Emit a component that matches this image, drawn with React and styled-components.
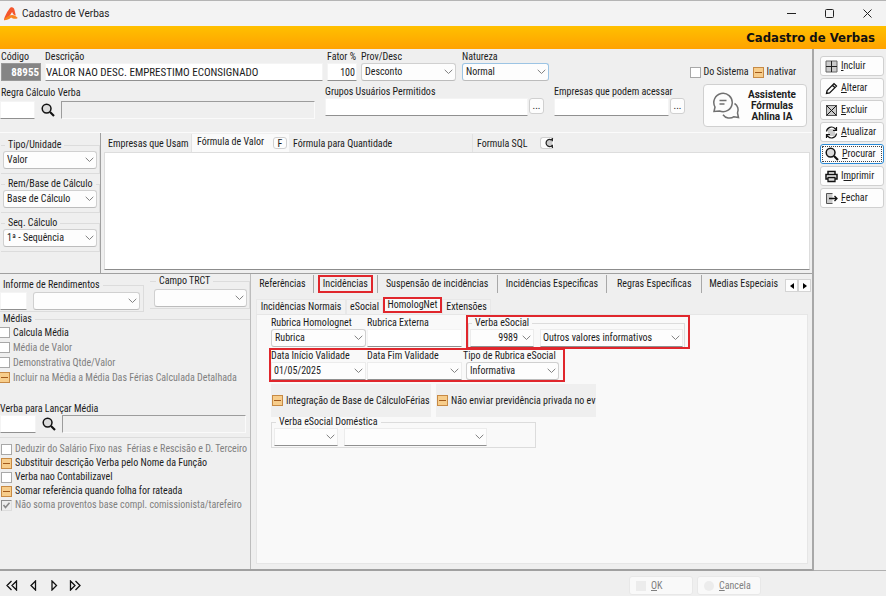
import { useEffect, useRef } from "react";
import styled, { createGlobalStyle, css } from "styled-components";

const chevron =
  "url(\"data:image/svg+xml,%3Csvg xmlns='http://www.w3.org/2000/svg' width='9' height='6' fill='none' stroke='%23808080' stroke-width='1'%3E%3Cpath d='M.7.8 4.5 4.5 8.3.8'/%3E%3C/svg%3E\")";

const AppIcon = () => (
  <svg width="16" height="16" viewBox="0 0 16 16">
    <path d="M7.500 1.500C9.500.8 11 1.500 11.500 4l1.300 5.500c-1.800-.2-3-1-3.600-3.500C7.500 8 6 12.500 1 14.200 1.200 11 4.500 4.800 7.500 1.500z" fill="#f4562d" />
    <path d="M5.500 10c3-1.800 6.500-1.500 9.300 2-2.600 1.700-5 .5-6.700-.6-2 1.800-4.300 2.600-7 2.800.8-2 2.500-3.200 4.400-4.200z" fill="#f7841f" />
  </svg>
);

const SearchIcon = () => (
  <svg width="14" height="14" viewBox="0 0 14 14" fill="none" stroke="#111">
    <circle cx="5.600" cy="5.600" r="4.400" strokeWidth="1.500" fill="#dcdcdc" />
    <path d="M9 9l4 4" strokeWidth="2.200" />
  </svg>
);

const ChatIcon = () => (
  <svg width="28" height="28" viewBox="0 0 28 28" fill="none" stroke="#707070" strokeWidth="1.500">
    <path d="M2 19.500l1-4.500a9.200 9.200 0 1 1 4.500 4z" />
    <path d="M7.500 8.500h7M7.500 12h5" />
    <path d="M22.500 11.500a7.500 7.500 0 0 1 3 9.500l1 4.500-4.500-.8a8 8 0 0 1-11-2" />
  </svg>
);

const actionPaths = {
  grid: (
    <>
      <path d="M1 1h11v11H1z" fill="#ccc" stroke="#666" />
      <path d="M6.500 1v11M1 6.500h11" stroke="#222" />
    </>
  ),
  pencil: <path d="M1.500 11.500l.6-3L9 1.600l2.500 2.500-6.900 6.900-3.100.5zM7.500 3.200L10 5.700" strokeWidth="1.300" />,
  cross: (
    <>
      <path d="M1.500 1.500h10v10h-10z" fill="#ccc" stroke="#555" />
      <path d="M1.500 1.500l10 10M11.500 1.500l-10 10" />
    </>
  ),
  refresh: (
    <>
      <path d="M3 3h7v7H3z" fill="#ccc" stroke="none" />
      <path d="M1.500 5.500a5 5 0 0 1 8.500-3L11.500 4M11.500 1v3.500H8M11.500 7.500a5 5 0 0 1-8.500 3L1.500 9M1.500 12V8.500H5" strokeWidth="1.200" />
    </>
  ),
  printer: (
    <>
      <path d="M3 4V1.500h7V4M3 9H1V4.500h11V9h-2" strokeWidth="1.500" />
      <path d="M3 7.500h7v4H3z" fill="#ddd" strokeWidth="1.300" />
    </>
  ),
  exit: (
    <>
      <path d="M7.500 1.500h-6v10h6" fill="#ccc" stroke="#555" />
      <path d="M4 6.500h8M9.500 4L12 6.500 9.500 9" strokeWidth="1.300" />
    </>
  ),
};

const ActionIcon = ({ name }) => {
  if (name === "search") return <SearchIcon />;
  return (
    <svg width="13" height="13" viewBox="0 0 13 13" fill="none" stroke="#111">
      {actionPaths[name]}
    </svg>
  );
};

const actions = [
  { key: "I", rest: "ncluir", icon: "grid" },
  { key: "A", rest: "lterar", icon: "pencil" },
  { key: "E", rest: "xcluir", icon: "cross" },
  { key: "A", rest: "tualizar", icon: "refresh" },
  { key: "P", rest: "rocurar", icon: "search", focused: true },
  { pre: "I", key: "m", rest: "primir", icon: "printer" },
  { key: "F", rest: "echar", icon: "exit" },
];

const mainTabs = [
  { label: "Referências", width: 62 },
  { label: "Incidências", width: 64, marked: true },
  { label: "Suspensão de incidências", width: 120 },
  { label: "Incidências Especificas", width: 110 },
  { label: "Regras Específicas", width: 95 },
  { label: "Medias Especiais", width: 83 },
];

const subTabs = [
  { label: "Incidências Normais", width: 90 },
  { label: "eSocial", width: 37 },
  { label: "HomologNet", width: 59, marked: true },
  { label: "Extensões", width: 49 },
];

const Check = ({ label, mixed, ...rest }) => {
  const ref = useRef(null);
  useEffect(() => {
    ref.current.indeterminate = !!mixed;
  }, [mixed]);
  return (
    <CheckLabel $muted={rest.disabled}>
      <CheckBox ref={ref} type="checkbox" {...rest} />
      {label}
    </CheckLabel>
  );
};

const Combo = ({ label, value = "", ...rest }) => (
  <Select aria-label={label} defaultValue={value} {...rest}>
    <option>{value}</option>
  </Select>
);

const App = () => (
  <Window>
    <GlobalStyle />
    <TitleBar>
      <AppIcon />
      <span>Cadastro de Verbas</span>
      <WindowButtons>
        <WindowButton aria-label="Minimizar">
          <svg width="9" height="9" viewBox="0 0 9 9" stroke="#222"><path d="M0 4.500h9" /></svg>
        </WindowButton>
        <WindowButton aria-label="Maximizar">
          <svg width="9" height="9" viewBox="0 0 9 9" fill="none" stroke="#222"><rect x=".5" y=".5" width="8" height="8" rx="1" /></svg>
        </WindowButton>
        <WindowButton aria-label="Fechar janela">
          <svg width="9" height="9" viewBox="0 0 9 9" stroke="#222"><path d="M.5.5l8 8M8.500.5l-8 8" /></svg>
        </WindowButton>
      </WindowButtons>
    </TitleBar>
    <Banner>Cadastro de Verbas</Banner>

    <Body>
      <Main>
        <Header>
          <HeaderRow>
            <Field $width={40}>
              Código
              <CodeInput defaultValue="88955" />
            </Field>
            <Field $width={278}>
              Descrição
              <NameInput defaultValue="VALOR NAO DESC. EMPRESTIMO ECONSIGNADO" />
            </Field>
            <Field $width={30}>
              Fator %
              <Input defaultValue="100" $right />
            </Field>
            <Field $width={95}>
              Prov/Desc
              <Combo value="Desconto" />
            </Field>
            <Field $width={87}>
              Natureza
              <Combo value="Normal" $active />
            </Field>
            <HeaderChecks>
              <Check label="Do Sistema" />
              <Check label="Inativar" mixed />
            </HeaderChecks>
          </HeaderRow>
          <LookupRow>
            <Lookup>
              <label htmlFor="regra">Regra Cálculo Verba</label>
              <LookupLine>
                <Input id="regra" $width={35} />
                <IconButton aria-label="Procurar regra"><SearchIcon /></IconButton>
                <ReadOnly aria-label="Regra selecionada" readOnly $width={254} />
              </LookupLine>
            </Lookup>
            <Picker>
              <label htmlFor="grupos">Grupos Usuários Permitidos</label>
              <PickerLine>
                <Input id="grupos" $width={203} />
                <DotsButton aria-label="Escolher grupos">...</DotsButton>
              </PickerLine>
            </Picker>
            <Picker>
              <label htmlFor="empresas">Empresas que podem acessar</label>
              <PickerLine>
                <Input id="empresas" $width={115} />
                <DotsButton aria-label="Escolher empresas">...</DotsButton>
              </PickerLine>
            </Picker>
            <AssistantButton>
              <ChatIcon />
              <span>Assistente Fórmulas Ahlina IA</span>
            </AssistantButton>
          </LookupRow>
        </Header>

        <Formula>
          <FormulaSide>
            <Group>
              <legend>Tipo/Unidade</legend>
              <Combo label="Tipo/Unidade" value="Valor" />
            </Group>
            <Group>
              <legend>Rem/Base de Cálculo</legend>
              <Combo label="Rem/Base de Cálculo" value="Base de Cálculo" />
            </Group>
            <Group>
              <legend>Seq. Cálculo</legend>
              <Combo label="Seq. Cálculo" value="1ª - Sequência" />
            </Group>
          </FormulaSide>
          <FormulaPanel>
            <FormulaTabs>
              <FormulaTab $width={88}>Empresas que Usam</FormulaTab>
              <FormulaTab $width={78} $active>Fórmula de Valor</FormulaTab>
              <FormulaTag $active><KeyButton aria-label="Editar fórmula">F</KeyButton></FormulaTag>
              <FormulaTab $width={184}>Fórmula para Quantidade</FormulaTab>
              <FormulaTab $width={64} $last>Formula SQL</FormulaTab>
              <FormulaTag>
                <KeyButton aria-label="Atualizar fórmula" $end>
                  <svg width="10" height="10" viewBox="0 0 12 12" fill="#ccc" stroke="#222" strokeWidth="1.500">
                    <path d="M10 4V1L8.500 2.200A4.200 4.200 0 1 0 9 9.500L10 11V8" />
                  </svg>
                </KeyButton>
              </FormulaTag>
            </FormulaTabs>
            <FormulaText aria-label="Fórmula de Valor" />
          </FormulaPanel>
        </Formula>

        <Details>
          <DetailsSide>
            <TopGroups>
              <IncomeGroup>
                <legend>Informe de Rendimentos</legend>
                <Input aria-label="Código do informe" $width={27} />
                <Combo label="Informe de Rendimentos" $width={107} />
              </IncomeGroup>
              <TrctGroup>
                <legend>Campo TRCT</legend>
                <Combo label="Campo TRCT" />
              </TrctGroup>
            </TopGroups>
            <Averages>
              <legend>Médias</legend>
              <Check label="Calcula Média" />
              <Check label="Média de Valor" disabled />
              <Check label="Demonstrativa Qtde/Valor" disabled />
              <Check label="Incluir na Média a Média Das Férias Calculada Detalhada" disabled mixed />
            </Averages>
            <AverageLookup>
              <label htmlFor="media">Verba para Lançar Média</label>
              <LookupLine>
                <Input id="media" $width={36} />
                <IconButton aria-label="Procurar verba"><SearchIcon /></IconButton>
                <ReadOnly aria-label="Verba selecionada" readOnly />
              </LookupLine>
            </AverageLookup>
            <Options>
              <Check label="Deduzir do Salário Fixo nas  Férias e Rescisão e D. Terceiro" disabled />
              <Check label="Substituir descrição Verba pelo Nome da Função" mixed />
              <Check label="Verba nao Contabilizavel" />
              <Check label="Somar referência quando folha for rateada" mixed />
              <Check label="Não soma proventos base compl. comissionista/tarefeiro" disabled defaultChecked />
            </Options>
          </DetailsSide>

          <DetailsPanel>
            <MainTabs>
              {mainTabs.map(({ label, width, marked }) => (
                <MainTab key={label} $width={width} $marked={marked}>
                  <span>{label}</span>
                </MainTab>
              ))}
              <ScrollButtons>
                <button aria-label="Abas anteriores">
                  <svg width="4" height="6" viewBox="0 0 4 6"><path d="M4 0v6L0 3z" /></svg>
                </button>
                <button aria-label="Próximas abas">
                  <svg width="4" height="6" viewBox="0 0 4 6"><path d="M0 0v6l4-3z" /></svg>
                </button>
              </ScrollButtons>
            </MainTabs>
            <SubTabs>
              {subTabs.map(({ label, width, marked }) => (
                <SubTab key={label} $width={width} $marked={marked}>
                  {label}
                </SubTab>
              ))}
            </SubTabs>
            <Sheet>
              <SheetRow>
                <Field $width={95}>
                  Rubrica Homolognet
                  <Combo value="Rubrica" />
                </Field>
                <Field $width={95}>
                  Rubrica Externa
                  <Input />
                </Field>
                <MarkedGroup>
                  <Group $row>
                    <legend>Verba eSocial</legend>
                    <Combo label="Código eSocial" value="9989" $width={64} $flat $right />
                    <Combo label="Verba eSocial" value="Outros valores informativos" $width={143} $flat />
                  </Group>
                </MarkedGroup>
              </SheetRow>
              <MarkedRow>
                <Field $width={95}>
                  Data Início Validade
                  <Combo value="01/05/2025" $flat />
                </Field>
                <Field $width={95}>
                  Data Fim Validade
                  <Combo $flat />
                </Field>
                <Field $width={99} $inset>
                  Tipo de Rubrica eSocial
                  <Combo value="Informativa" />
                </Field>
              </MarkedRow>
              <Flags>
                <Flag><Check label="Integração de Base de CálculoFérias" mixed /></Flag>
                <Flag><Check label="Não enviar previdência privada no ev" mixed /></Flag>
              </Flags>
              <DomesticGroup $row>
                <legend>Verba eSocial Doméstica</legend>
                <Combo label="Código doméstica" $width={64} $flat />
                <Combo label="Verba eSocial Doméstica" $width={143} $flat />
              </DomesticGroup>
            </Sheet>
          </DetailsPanel>
        </Details>
      </Main>

      <Actions>
        {actions.map(({ pre, key, rest, icon, focused }) => (
          <ActionButton key={icon} $focused={focused}>
            <ActionIcon name={icon} />
            <span>{pre}<u>{key}</u>{rest}</span>
          </ActionButton>
        ))}
      </Actions>
    </Body>

    <Footer>
      <Pager>
        <IconButton aria-label="Primeiro">
          <svg width="12" height="11" viewBox="0 0 12 11"><path d="M5.500 1L1 5.500 5.500 10M10.500 1v9L6 5.500z" /></svg>
        </IconButton>
        <IconButton aria-label="Anterior">
          <svg width="12" height="11" viewBox="0 0 12 11"><path d="M8.500 1v9L4 5.500z" /></svg>
        </IconButton>
        <IconButton aria-label="Próximo">
          <svg width="12" height="11" viewBox="0 0 12 11"><path d="M4 1v9l4.500-4.500z" /></svg>
        </IconButton>
        <IconButton aria-label="Último">
          <svg width="12" height="11" viewBox="0 0 12 11"><path d="M1.500 1v9L6 5.500zM6.500 1L11 5.500 6.500 10" /></svg>
        </IconButton>
      </Pager>
      <FooterButton disabled>
        <FooterMark />
        <span><u>O</u>K</span>
      </FooterButton>
      <FooterButton disabled>
        <FooterMark $round />
        <span><u>C</u>ancela</span>
      </FooterButton>
    </Footer>
  </Window>
);
export default App;

const GlobalStyle = createGlobalStyle`
  * {
    box-sizing: border-box;
  }
  body {
    margin: 0;
    background: #efefef;
    color: #1c1c1c;
  }
  body, button, input, select, textarea {
    font-family: "Roboto Condensed", Roboto, sans-serif;
    font-size: 10px;
    line-height: 12px;
  }
  button {
    padding: 0;
    border: none;
    background: none;
    color: inherit;
    white-space: nowrap;
  }
  label, legend {
    white-space: nowrap;
  }
`;

const Window = styled.div`
  display: flex;
  flex-direction: column;
  min-height: 100vh;
`;

const TitleBar = styled.header`
  display: flex;
  align-items: center;
  gap: 3px;
  height: 26px;
  padding-left: 3px;
  border-top: 1px solid #b4b4b4;
  background: #f3f3f3;
  font-family: Roboto, sans-serif;
`;

const WindowButtons = styled.div`
  display: flex;
  margin-left: auto;
`;

const WindowButton = styled.button`
  display: grid;
  place-items: center;
  width: 38px;
  height: 25px;
`;

const Banner = styled.h1`
  margin: 0;
  padding-right: 11px;
  height: 23px;
  background: linear-gradient(#ffc000, #ffa200);
  color: #111;
  font: bold 13px/24px "DejaVu Sans Condensed", "DejaVu Sans", sans-serif;
  text-align: right;
`;

const Body = styled.div`
  display: flex;
  flex: 1;
`;

const Main = styled.main`
  display: flex;
  flex-direction: column;
  flex: 1;
  min-width: 0;
  border-right: 2px solid #a8a8a8;
  border-bottom: 2px solid #a0a0a0;
`;

const controlStyle = css`
  flex: ${({ $width }) => ($width ? "none" : "0 1 auto")};
  width: ${({ $width }) => ($width ? $width + "px" : "100%")};
  min-width: 0;
  height: 18px;
  margin: 0;
  padding: 0 3px;
  color: inherit;
  text-align: ${({ $right }) => ($right ? "right" : "left")};
  outline: none;
`;

const Input = styled.input`
  ${controlStyle}
  padding: 0 1px;
  border: 1px solid #f4f4f4;
  border-bottom-color: #909090;
  background: #fff;
`;

const NameInput = styled(Input)`
  padding: 0;
  font-size: 11px;
`;

const CodeInput = styled(Input)`
  padding-right: 1px;
  border-color: #999;
  background: #858585;
  color: #fff;
  font-size: 11px;
  font-weight: bold;
  text-align: right;
`;

const ReadOnly = styled(Input)`
  border-color: #9c9c9c #fafafa #fafafa #9c9c9c;
  background: #efefef;
`;

const Select = styled.select`
  ${controlStyle}
  appearance: none;
  padding-right: ${({ $right }) => ($right ? "15px" : "12px")};
  border: 1px solid ${({ $active }) => ($active ? "#9cc4e4" : "#d0d0d0")};
  border-bottom-color: #bcbcbc;
  border-radius: 3px;
  background: #fdfdfd ${chevron} no-repeat right 2px center;
  ${({ $flat }) =>
    $flat &&
    css`
      padding-left: 2px;
      border-color: #ececec #ececec #909090;
      border-radius: 0;
    `}
`;

const Field = styled.label`
  display: flex;
  flex-direction: column;
  flex: none;
  width: ${({ $width }) => $width}px;
  ${({ $inset }) =>
    $inset &&
    css`
      ${Select} {
        width: auto;
        margin: 0 3px;
      }
    `}
`;

const CheckLabel = styled.label`
  display: flex;
  align-items: center;
  gap: 3px;
  white-space: pre;
  color: ${({ $muted }) => ($muted ? "#808080" : "inherit")};
`;

const CheckBox = styled.input`
  appearance: none;
  flex: none;
  width: 11px;
  height: 11px;
  margin: 0;
  border: 1px solid #a8a8a8;
  background: #fff;
  &:indeterminate {
    border-color: #c78a45;
    background: linear-gradient(#a25a1c, #a25a1c) center / 7px 1px no-repeat #f7cd8b;
  }
  &:checked {
    border-color: #8c8c8c #ddd #ddd #8c8c8c;
    background: #ececec
      url("data:image/svg+xml,%3Csvg xmlns='http://www.w3.org/2000/svg' width='9' height='9' fill='none' stroke='%23888' stroke-width='1.6'%3E%3Cpath d='M1.500 4 3.500 6.500 7.500 1.800'/%3E%3C/svg%3E");
  }
`;

const Header = styled.section`
  height: 84px;
  padding-top: 2px;
  border-bottom: 1px solid #fbfbfb;
`;

const HeaderRow = styled.div`
  display: flex;
  gap: 4px;
  padding-left: 1px;
  ${Field}:nth-child(5) {
    margin-left: 2px;
  }
`;

const HeaderChecks = styled.div`
  display: flex;
  gap: 4px;
  margin: 12px 16px 0 auto;
`;

const LookupRow = styled.div`
  display: flex;
  align-items: flex-start;
  gap: 10px;
  margin-top: 3px;
  padding-right: 5px;
`;

const Lookup = styled.div`
  display: flex;
  flex-direction: column;
  gap: 2px;
  padding-top: 3px;
  label {
    padding-left: 1px;
  }
`;

const LookupLine = styled.div`
  display: flex;
  align-items: center;
  gap: 6px;
`;

const IconButton = styled.button`
  display: grid;
  place-items: center;
  flex: none;
  svg {
    display: block;
  }
`;

const Picker = styled.div`
  display: flex;
  flex-direction: column;
  padding-top: 2px;
`;

const PickerLine = styled.div`
  display: flex;
  gap: 1px;
`;

const DotsButton = styled.button`
  width: 15px;
  height: 16px;
  border: 1px solid #d0d0d0;
  border-radius: 3px;
  background: #fdfdfd;
`;

const AssistantButton = styled.button`
  display: flex;
  align-items: center;
  gap: 5px;
  flex: none;
  width: 104px;
  height: 43px;
  margin-left: auto;
  padding: 0 7px 0 8px;
  border: 1px solid #d0d0d0;
  border-radius: 4px;
  background: #fdfdfd;
  font: bold 10px/11px Roboto, sans-serif;
  white-space: normal;
  svg {
    flex: none;
  }
`;

const Formula = styled.section`
  display: flex;
  height: 141px;
  border-bottom: 1px solid #a0a0a0;
`;

const FormulaSide = styled.div`
  display: flex;
  flex-direction: column;
  gap: 4px;
  width: 101px;
  padding: 6px 0 0 1px;
  border-right: 1px solid #a0a0a0;
`;

const Group = styled.fieldset`
  display: ${({ $row }) => ($row ? "flex" : "block")};
  gap: 6px;
  min-width: 0;
  margin: 0;
  padding: 0 2px 4px;
  border: 1px solid #dcdcdc;
  border-left-width: ${({ $row }) => ($row ? "1px" : "0")};
  legend {
    margin-left: 2px;
    padding: 0 3px;
  }
`;

const FormulaPanel = styled.div`
  display: flex;
  flex-direction: column;
  flex: 1;
  min-width: 0;
  padding: 1px 2px 3px 3px;
`;

const FormulaTabs = styled.div`
  display: flex;
  height: 18px;
`;

const FormulaTab = styled.button`
  width: ${({ $width }) => $width}px;
  padding: ${({ $active }) => ($active ? "0 0 2px 5px" : "2px 0 0 4px")};
  border-right: ${({ $active, $last }) => ($active || $last ? "none" : "1px solid #e2e2e2")};
  background: ${({ $active }) => ($active ? "#fafafa" : "transparent")};
  text-align: left;
`;

const FormulaTag = styled.div`
  display: flex;
  align-items: center;
  width: 19px;
  background: ${({ $active }) => ($active ? "#fafafa" : "transparent")};
`;

const KeyButton = styled.button`
  display: grid;
  place-items: center ${({ $end }) => ($end ? "end" : "center")};
  width: 14px;
  height: 12px;
  margin-left: 3px;
  border: 1px solid #d0d0d0;
  border-right-width: ${({ $end }) => ($end ? "0" : "1px")};
  border-radius: 3px;
  background: #fdfdfd;
`;

const FormulaText = styled.textarea`
  flex: 1;
  padding: 4px;
  border: 1px solid #ddd;
  border-bottom-color: #8c8c8c;
  background: #fff;
  resize: none;
  outline: none;
`;

const Details = styled.section`
  display: flex;
  flex: 1;
`;

const DetailsSide = styled.div`
  display: flex;
  flex-direction: column;
  flex: none;
  width: 251px;
  border-right: 1px solid #bdbdbd;
`;

const TopGroups = styled.div`
  display: flex;
  align-items: flex-start;
  gap: 6px;
`;

const IncomeGroup = styled(Group)`
  display: flex;
  width: 144px;
  margin-top: 5px;
  padding: 1px 2px 1px 0;
  legend {
    margin-left: 0;
  }
`;

const TrctGroup = styled(Group)`
  flex: 1;
  margin-top: 1px;
  padding: 2px 2px 1px 4px;
`;

const Averages = styled.fieldset`
  display: flex;
  flex-direction: column;
  margin: 1px 0 0;
  padding: 0;
  border: none;
  border-top: 1px solid #dcdcdc;
  legend {
    padding: 0 3px;
  }
  ${CheckLabel} {
    height: 15px;
  }
  ${CheckBox} {
    width: 10px;
    border-left: none;
  }
`;

const AverageLookup = styled.div`
  display: flex;
  flex-direction: column;
  margin-top: 18px;
  padding: 0 4px 4px 0;
  border-bottom: 1px solid #dcdcdc;
`;

const Options = styled.div`
  display: flex;
  flex-direction: column;
  padding: 4px 0 0 1px;
  ${CheckLabel} {
    height: 14px;
  }
`;

const DetailsPanel = styled.div`
  display: flex;
  flex-direction: column;
  flex: 1;
  min-width: 0;
  padding: 1px 4px 5px 5px;
`;

const marked = css`
  border: 2px solid #e0262c;
`;

const MainTabs = styled.div`
  display: flex;
  height: 18px;
  margin: 0 -3px 0 -4px;
`;

const MainTab = styled.button`
  width: ${({ $width }) => $width}px;
  border-right: 1px solid #a8a8a8;
  &:nth-child(6) {
    border: none;
  }
  span {
    display: block;
    ${({ $marked }) =>
      $marked &&
      css`
        ${marked}
        margin: 0 4px;
        padding: 1px 0;
      `}
  }
`;

const ScrollButtons = styled.div`
  display: flex;
  margin: 4px 0 0 auto;
  button {
    display: grid;
    place-items: center;
    width: 13px;
    height: 13px;
    border: 1px solid #d4d4d4;
    background: #fdfdfd;
  }
`;

const SubTabs = styled.div`
  display: flex;
  align-items: flex-end;
  height: 21px;
`;

const SubTab = styled.button`
  width: ${({ $width }) => $width}px;
  height: 15px;
  border: 1px solid #e8e8e8;
  border-bottom: none;
  background: #f2f2f2;
  ${({ $marked }) =>
    $marked &&
    css`
      ${marked}
      height: 16px;
      margin-bottom: 1px;
      background: #f9f9f9;
    `}
`;

const Sheet = styled.div`
  flex: 1;
  padding: 2px 14px;
  border: 1px solid #e6e6e6;
  background: #f9f9f9;
`;

const SheetRow = styled.div`
  display: flex;
  gap: 1px;
`;

const MarkedGroup = styled.div`
  width: 220px;
  height: 30px;
  margin-left: 5px;
  padding-right: 3px;
  outline: 2px solid #e0262c;
  ${Group} {
    height: 30px;
    padding: 0 2px 0 1px;
    border-bottom: none;
  }
`;

const MarkedRow = styled(SheetRow)`
  width: 292px;
  margin-top: 3px;
  outline: 2px solid #e0262c;
`;

const Flags = styled.div`
  display: flex;
  gap: 5px;
  margin-top: 4px;
`;

const Flag = styled.div`
  display: flex;
  align-items: center;
  width: 160px;
  height: 33px;
  padding-left: 1px;
  overflow: hidden;
  background: #efefef;
`;

const DomesticGroup = styled(Group)`
  width: 265px;
  margin-top: -1px;
  padding: 0 2px 1px;
`;

const Actions = styled.aside`
  display: flex;
  flex-direction: column;
  gap: 2px;
  flex: none;
  width: 72px;
  padding: 7px 2px 0 6px;
  border-bottom: 1px solid #b0b0b0;
`;

const ActionButton = styled.button`
  display: flex;
  align-items: center;
  gap: 3px;
  height: 20px;
  padding-left: 4px;
  border: 1px solid ${({ $focused }) => ($focused ? "#2a8ad6" : "#d0d0d0")};
  border-radius: 3px;
  background: #fdfdfd;
  ${({ $focused }) => $focused && "outline: 1px dotted #444; outline-offset: -3px;"}
`;

const Footer = styled.footer`
  display: flex;
  align-items: center;
  gap: 4px;
  height: 25px;
  padding: 4px 125px 0 6px;
`;

const Pager = styled.nav`
  display: flex;
  gap: 9px;
  margin-right: auto;
  svg {
    fill: none;
    stroke: #111;
    stroke-width: 1.3;
  }
`;

const FooterButton = styled.button`
  display: flex;
  align-items: center;
  gap: 5px;
  width: 64px;
  height: 19px;
  padding-left: 6px;
  border: 1px solid #e8e8e8;
  border-radius: 3px;
  background: #f9f9f9;
  color: #808080;
`;

const FooterMark = styled.i`
  width: 10px;
  height: 10px;
  border-radius: ${({ $round }) => ($round ? "50%" : "0")};
  background: #ececec;
`;
